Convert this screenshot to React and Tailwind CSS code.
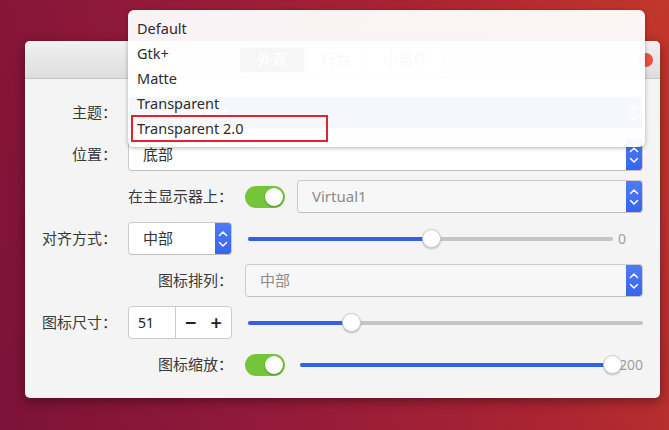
import React from 'react';

const themes = ['Default', 'Gtk+', 'Matte', 'Transparent', 'Transparent 2.0'];

function Chevrons() {
  return (
    <svg width="10" height="22" viewBox="0 0 10 22" fill="none" stroke="white" strokeWidth="1.5" strokeLinecap="round" strokeLinejoin="round">
      <path d="M1.5 7.5 L5 4 L8.5 7.5" />
      <path d="M1.5 14.5 L5 18 L8.5 14.5" />
    </svg>
  );
}

function Combo({ value, className = '', disabled = false, pressed = false }) {
  const bg = pressed ? 'bg-[#3e66d6] text-white' : disabled ? 'bg-[#f7f7f7] text-[#8a8a8a]' : 'bg-white text-[#333]';
  return (
    <div className={`h-[33px] rounded-[4px] border border-[#cbcbcb] border-b-[#bdbdbd] flex overflow-hidden ${bg} ${className}`}>
      <div className="flex-1 flex items-center pl-[14px] text-[15px]">{value}</div>
      <div className="w-[16px] flex items-center justify-center bg-[linear-gradient(#4d7cf8,#3764ee)]">
        <Chevrons />
      </div>
    </div>
  );
}

function Toggle() {
  return (
    <div className="w-[40px] h-[22px] rounded-full bg-[#74c53a] flex items-center justify-end pr-[2px] shrink-0">
      <div className="w-[18px] h-[18px] rounded-full bg-white shadow-[0_1px_2px_rgba(0,0,0,0.3)]" />
    </div>
  );
}

function Slider({ value, className = '' }) {
  return (
    <div className={`relative h-[20px] flex items-center ${className}`}>
      <div className="w-full h-[4px] rounded-full bg-[#c5c5c5]" />
      <div className="absolute left-0 h-[4px] rounded-full bg-[#3162e6]" style={{ width: `${value}%` }} />
      <div
        className="absolute w-[19px] h-[19px] -ml-[9px] rounded-full bg-white border border-[#cfcfcf] shadow-[0_1px_2px_rgba(0,0,0,0.25)]"
        style={{ left: `${value}%` }}
      />
    </div>
  );
}

function Label({ children, className = '' }) {
  return <div className={`text-[15px] text-[#3a3a3a] text-right ${className}`}>{children}</div>;
}

export default function App() {
  return (
    <div
      className="relative w-[669px] h-[430px] overflow-hidden bg-[linear-gradient(75deg,#7c1238_0%,#931a3a_35%,#ab2432_70%,#c2372b_100%)] pt-[41px] pl-[25px]"
      style={{ fontFamily: '"Noto Sans", "Noto Sans CJK SC", sans-serif' }}
    >
      {/* window */}
      <div className="w-[635px] h-[357px] rounded-[5px] bg-[#f4f4f4] shadow-[0_3px_12px_rgba(0,0,0,0.4)] overflow-hidden">
        <div className="relative h-[38px] flex items-center justify-center bg-[linear-gradient(#f1f1f1,#dddddd)] border-b border-[#c6c6c6]">
          <div className="flex h-[26px] rounded-[4px] border border-[#c4c4c4] overflow-hidden text-[15px] ml-[-1px]">
            <div className="w-[64px] flex items-center justify-center bg-[#5a5a5a] text-white">外观</div>
            <div className="w-[62px] flex items-center justify-center bg-[#fafafa] text-[#666] border-l border-[#c4c4c4]">行为</div>
            <div className="w-[78px] flex items-center justify-center bg-[#fafafa] text-[#666] border-l border-[#c4c4c4]">小部件</div>
          </div>
          <div className="absolute right-[7px] top-[12px] w-[14px] h-[14px] rounded-full bg-[#ee4d40]" />
        </div>

        <div className="grid grid-cols-[92px_1fr] gap-x-[11px] gap-y-[9px] auto-rows-[33px] items-center pt-[17px] pr-[17px]">
          <Label>主题：</Label>
          <Combo value="Transparent" pressed />

          <Label>位置：</Label>
          <Combo value="底部" />

          <div className="col-start-2 flex items-center">
            <Label className="w-[105px] shrink-0">在主显示器上：</Label>
            <div className="ml-[12px]"><Toggle /></div>
            <Combo value="Virtual1" disabled className="flex-1 ml-[12px]" />
          </div>

          <Label>对齐方式：</Label>
          <div className="flex items-center">
            <Combo value="中部" className="w-[104px] shrink-0" />
            <Slider value={50} className="flex-1 ml-[16px]" />
            <div className="w-[30px] pl-[5px] text-[14px] text-[#a0a0a0]">0</div>
          </div>

          <div className="col-start-2 flex items-center">
            <Label className="w-[105px] shrink-0">图标排列：</Label>
            <Combo value="中部" disabled className="flex-1 ml-[12px]" />
          </div>

          <Label>图标尺寸：</Label>
          <div className="flex items-center">
            <div className="w-[104px] h-[33px] shrink-0 flex rounded-[4px] border border-[#cbcbcb] bg-white text-[#222]">
              <div className="w-[47px] flex items-center pl-[9px] text-[14px] border-r border-[#cbcbcb]">51</div>
              <div className="flex-1 flex items-center justify-center gap-[14px] text-[20px] font-semibold">
                <span>−</span>
                <span>+</span>
              </div>
            </div>
            <Slider value={26} className="flex-1 ml-[16px]" />
          </div>

          <div className="col-start-2 flex items-center">
            <Label className="w-[105px] shrink-0">图标缩放：</Label>
            <div className="ml-[12px]"><Toggle /></div>
            <Slider value={100} className="flex-1 ml-[15px]" />
            <div className="w-[31px] pl-[7px] text-[14px] text-[#a0a0a0]">200</div>
          </div>
        </div>
      </div>

      {/* popup */}
      <div className="absolute left-[128px] top-[10px] w-[517px] h-[137px] rounded-[6px] bg-white/[0.95] shadow-[0_1px_4px_rgba(0,0,0,0.3)] py-[6px]">
        {themes.map((t) => (
          <div key={t} className="h-[25px] flex items-center pl-[9px] text-[14.5px] text-[#2c2c2c]">
            {t}
          </div>
        ))}
        <div className="absolute left-[3px] top-[105px] w-[197px] h-[27px] border-2 border-[#e3232b]" />
      </div>
    </div>
  );
}
